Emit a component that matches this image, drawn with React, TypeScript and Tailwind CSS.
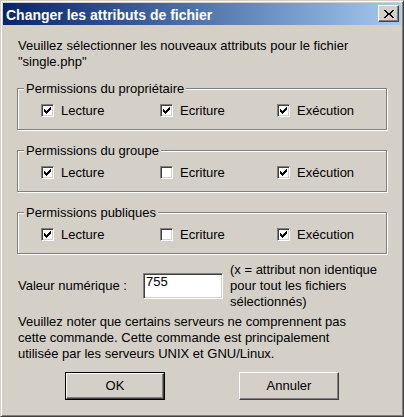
import React from "react";

type Perm = { label: string; checked: boolean };

const groups: { title: string; perms: Perm[] }[] = [
  {
    title: "Permissions du propriétaire",
    perms: [
      { label: "Lecture", checked: true },
      { label: "Ecriture", checked: true },
      { label: "Exécution", checked: true },
    ],
  },
  {
    title: "Permissions du groupe",
    perms: [
      { label: "Lecture", checked: true },
      { label: "Ecriture", checked: false },
      { label: "Exécution", checked: true },
    ],
  },
  {
    title: "Permissions publiques",
    perms: [
      { label: "Lecture", checked: true },
      { label: "Ecriture", checked: false },
      { label: "Exécution", checked: true },
    ],
  },
];

const colWidths = ["w-[119px]", "w-[117px]", "flex-1"];

function CheckBox({ checked }: { checked: boolean }) {
  return (
    <span className="flex h-[13px] w-[13px] shrink-0 items-center justify-center border border-t-[#808080] border-l-[#808080] border-b-white border-r-white bg-white shadow-[inset_1px_1px_0_#404040,inset_-1px_-1px_0_#d4d0c8]">
      {checked && (
        <svg width="7" height="7" viewBox="0 0 7 7" shapeRendering="crispEdges">
          <path
            d="M0 2h1v3H0z M1 3h1v3H1z M2 4h1v3H2z M3 3h1v3H3z M4 2h1v3H4z M5 1h1v3H5z M6 0h1v3H6z"
            fill="#000"
          />
        </svg>
      )}
    </span>
  );
}

function CloseGlyph() {
  return (
    <svg width="10" height="8" viewBox="0 0 10 8" shapeRendering="crispEdges">
      <path
        d="M0 0h2v1H0z M8 0h2v1H8z M1 1h2v1H1z M7 1h2v1H7z M2 2h2v1H2z M6 2h2v1H6z M3 3h4v2H3z M2 5h2v1H2z M6 5h2v1H6z M1 6h2v1H1z M7 6h2v1H7z M0 7h2v1H0z M8 7h2v1H8z"
        fill="#000"
      />
    </svg>
  );
}

function Group({ title, perms, first }: { title: string; perms: Perm[]; first?: boolean }) {
  return (
    <fieldset
      className={`${first ? "mt-[11px]" : "mt-[13px]"} m-0 min-w-0 border border-[#808080] px-0 pt-[7px] pb-[11px] shadow-[inset_1px_1px_0_#fff,1px_1px_0_#fff]`}
    >
      <legend className="ml-[6px] bg-[#d4d0c8] px-[2px] leading-[15px]">{title}</legend>
      <div className="flex h-[15px] items-center pl-[23px]">
        {perms.map((p, i) => (
          <div key={p.label} className={`flex items-center ${colWidths[i]}`}>
            <CheckBox checked={p.checked} />
            <span className="ml-[7px]">{p.label}</span>
          </div>
        ))}
      </div>
    </fieldset>
  );
}

export default function App() {
  return (
    <div className="flex h-[417px] w-[404px] flex-col border border-t-[#d4d0c8] border-l-[#d4d0c8] border-r-[#404040] border-b-[#404040] bg-[#d4d0c8] p-[2px] font-['Liberation_Sans',Arial,sans-serif] text-[13px] leading-[16px] text-black shadow-[inset_1px_1px_0_#fff,inset_-1px_-1px_0_#808080]">
      {/* title bar */}
      <div className="flex h-[22px] shrink-0 items-start justify-between bg-linear-to-r from-[#0a246a] to-[#a6caf0] pl-[3px] pr-[2px]">
        <span className="mt-[4px] text-[14px] font-bold leading-[16px] text-white">
          Changer les attributs de fichier
        </span>
        <button className="mt-[2px] flex h-[17px] w-[21px] items-center justify-center border border-t-white border-l-white border-b-[#404040] border-r-[#404040] bg-[#d4d0c8] shadow-[inset_-1px_-1px_0_#808080]">
          <CloseGlyph />
        </button>
      </div>

      <div className="flex flex-col px-[14px] pt-[13px]">
        <p className="pl-px">
          Veuillez sélectionner les nouveaux attributs pour le fichier
          <br />
          "single.php"
        </p>

        {groups.map((g, i) => (
          <Group key={g.title} title={g.title} perms={g.perms} first={i === 0} />
        ))}

        <div className="mt-[8px] flex items-center pl-px">
          <span className="w-[125px]">Valeur numérique :</span>
          <div className="h-[26px] w-[80px] border border-t-[#808080] border-l-[#808080] border-b-white border-r-white bg-white pl-[2px] shadow-[inset_1px_1px_0_#404040,inset_-1px_-1px_0_#d4d0c8]">
            755
          </div>
          <p className="ml-[7px]">
            (x = attribut non identique
            <br />
            pour tout les fichiers
            <br />
            sélectionnés)
          </p>
        </div>

        <p className="mt-[4px] pl-px">
          Veuillez noter que certains serveurs ne comprennent pas
          <br />
          cette commande. Cette commande est principalement
          <br />
          utilisée par les serveurs UNIX et GNU/Linux.
        </p>

        <div className="mt-[10px] flex justify-center gap-[74px]">
          <div className="h-[28px] w-[100px] border border-black">
            <button className="flex h-full w-full items-center justify-center border border-t-white border-l-white border-b-[#404040] border-r-[#404040] shadow-[inset_-1px_-1px_0_#808080]">
              OK
            </button>
          </div>
          <button className="flex h-[28px] w-[100px] items-center justify-center border border-t-white border-l-white border-b-[#404040] border-r-[#404040] shadow-[inset_-1px_-1px_0_#808080]">
            Annuler
          </button>
        </div>
      </div>
    </div>
  );
}
